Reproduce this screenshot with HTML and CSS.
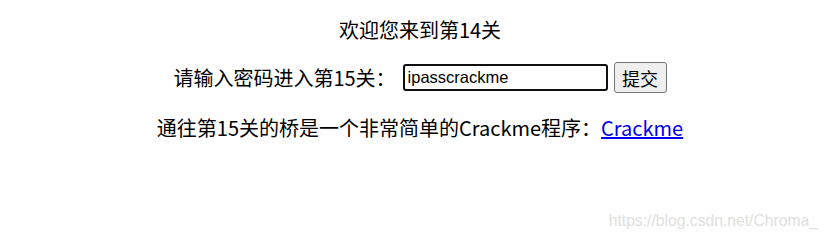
FILE: index.html
```html
<!DOCTYPE html>
<html lang="zh-CN">
<head>
<meta charset="utf-8">
<title>第14关</title>
<link rel="stylesheet" href="styles.css">
</head>
<body>
<main class="page">
  <p class="line line-title">欢迎您来到第14关</p>
  <form class="line line-form" onsubmit="return false">
    <label class="label" for="pwd">请输入密码进入第15关：</label>
    <input class="pwd" id="pwd" type="text" value="ipasscrackme">
    <button class="submit" type="submit">提交</button>
  </form>
  <p class="line line-link">通往第15关的桥是一个非常简单的Crackme程序：<a class="link" href="#">Crackme</a></p>
</main>
<div class="watermark">https://blog.csdn.net/Chroma_</div>
</body>
</html>
```

FILE: styles.css
```css
html, body {
  margin: 0;
  padding: 0;
  background: #fff;
}
body {
  width: 828px;
  height: 242px;
  position: relative;
  overflow: hidden;
  font-family: "Noto Sans CJK SC", "Noto Sans", sans-serif;
  font-size: 20px;
  color: #000;
}
.page {
  display: flex;
  flex-direction: column;
  align-items: center;
  padding-left: 12px;
  padding-top: 16px;
}
.line {
  margin: 0;
  line-height: 28px;
  text-align: center;
}
.line-form {
  display: flex;
  align-items: center;
  margin-top: 18px;
  height: 31px;
}
.label {
  margin-right: 7px;
}
.pwd {
  box-sizing: border-box;
  width: 205px;
  height: 27px;
  border: 2px solid #101010;
  border-radius: 3px;
  padding: 0 3px;
  font-family: "Liberation Sans", Arial, sans-serif;
  font-size: 16.5px;
  color: #000;
  outline: none;
  margin: 0;
}
.submit {
  box-sizing: border-box;
  width: 53px;
  height: 31px;
  margin: 0 0 0 6px;
  border: 1px solid #767676;
  border-radius: 3px;
  background: #efefef;
  font-family: "Noto Sans CJK SC", sans-serif;
  font-size: 18px;
  color: #000;
  padding: 0;
  line-height: 1;
}
.line-link {
  margin-top: 21px;
}
.link {
  color: #0000ee;
  text-decoration: underline;
}
.watermark {
  position: absolute;
  right: 10px;
  top: 210px;
  font-family: "Liberation Sans", Arial, sans-serif;
  font-size: 15.7px;
  color: #e0e0e0;
  line-height: 22px;
}
```
